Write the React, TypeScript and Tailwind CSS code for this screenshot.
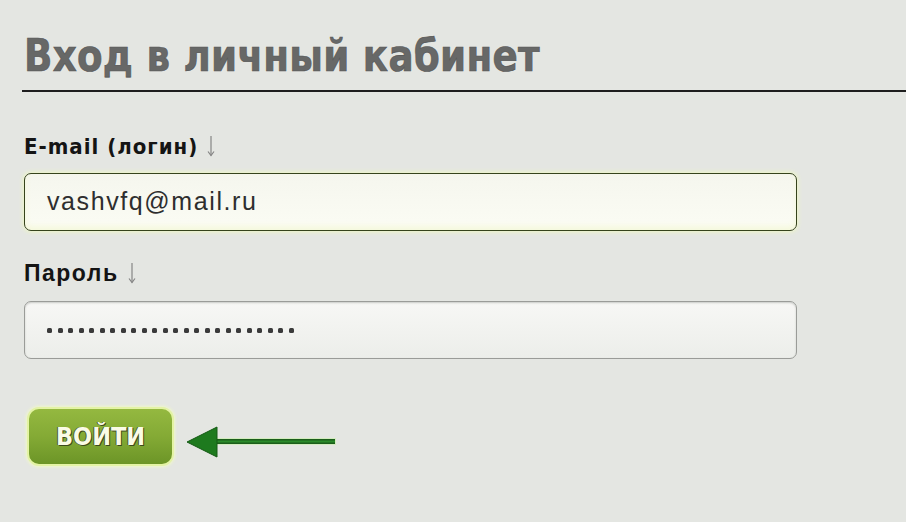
import React from 'react';

// thin grey down arrow drawn next to the field labels
const DownArrow: React.FC = () => (
  <svg width="8" height="22" viewBox="0 0 8 22" className="shrink-0">
    <path d="M4 1 V20.5" stroke="#858585" strokeWidth="1.2" fill="none" />
    <path d="M1 16.5 L4 20.5 L7 16.5" stroke="#858585" strokeWidth="1.2" fill="none" />
  </svg>
);

const LoginCard: React.FC = () => {
  // 24 dots for the masked password
  const dots = Array.from({ length: 24 });

  return (
    <div className="w-[906px] h-[522px] overflow-hidden bg-[#e4e6e2] font-['Liberation_Sans',sans-serif]">
      {/* Header with underline */}
      <div className="ml-[22px] border-b-2 border-[#1e1e1e] pt-[31px] pb-[9px]">
        <h1 className="ml-[2px] inline-block origin-left scale-x-[0.92] text-[45px] leading-[50px] font-bold text-[#676867] font-['DejaVu_Sans_Condensed','DejaVu_Sans',sans-serif] tracking-[0.3px] [-webkit-text-stroke:0.6px_#555]">
          Вход в личный кабинет
        </h1>
      </div>

      <div className="pl-[24px] flex flex-col">
        {/* Email */}
        <label className="mt-[41px] h-[26px] flex items-center gap-[9px] text-[22px] tracking-[1px] font-bold text-[#141414] font-['DejaVu_Sans_Condensed','DejaVu_Sans',sans-serif]">
          E-mail (логин)
          <DownArrow />
        </label>
        <div className="mt-[14px] w-[773px] h-[58px] rounded-[7px] border-[1.5px] border-[#36431c] bg-gradient-to-b from-[#f5f6ee] to-[#fbfcf4] shadow-[0_0_4px_1px_#eef7c4,inset_0_-3px_6px_#f4f8d8] flex items-center pl-[22px]">
          <span className="text-[25px] text-[#2e2e2e] tracking-[1.6px]">vashvfq@mail.ru</span>
        </div>

        {/* Password */}
        <label className="mt-[29px] h-[26px] flex items-center gap-[9px] text-[23px] tracking-[1.5px] font-bold text-[#141414]">
          Пароль
          <DownArrow />
        </label>
        <div className="mt-[15px] w-[773px] h-[58px] rounded-[7px] border border-[#9a9c98] bg-gradient-to-b from-[#f7f7f5] to-[#eceeea] shadow-[inset_0_1px_2px_#c8cac6] flex items-center pl-[22px] gap-[5.5px]">
          {dots.map((_, i) => (
            <span key={i} className="w-[5px] h-[5px] rounded-[1.5px] bg-[#3a3a3a]" />
          ))}
        </div>

        {/* Submit + arrow */}
        <div className="mt-[48px] flex items-center">
          <button className="ml-[3px] w-[147px] h-[59px] rounded-[12px] border-2 border-[#e3f3a4] bg-gradient-to-b from-[#94b840] via-[#84aa35] to-[#6c9527] shadow-[0_0_3px_1px_#f0f8c8] text-[25px] font-bold text-[#fafbe6] font-['DejaVu_Sans_Condensed','DejaVu_Sans',sans-serif] [text-shadow:1px_1px_0_#3d4a1c,-1px_0_0_#4a5a22]">
            ВОЙТИ
          </button>
          <svg className="ml-[13px] mt-[11px]" width="150" height="34" viewBox="0 0 150 34">
            <rect x="29" y="13" width="120" height="7" fill="#c8f0a8" opacity="0.6" />
            <rect x="29" y="14" width="119" height="5" fill="#1b5e1b" />
            <rect x="29" y="15.5" width="119" height="2" fill="#2a8a2a" />
            <polygon points="0,17 30,2 30,32" fill="#1e7a1e" stroke="#155a15" strokeWidth="1" />
          </svg>
        </div>
      </div>
    </div>
  );
};

export default function App() {
  return <LoginCard />;
}
